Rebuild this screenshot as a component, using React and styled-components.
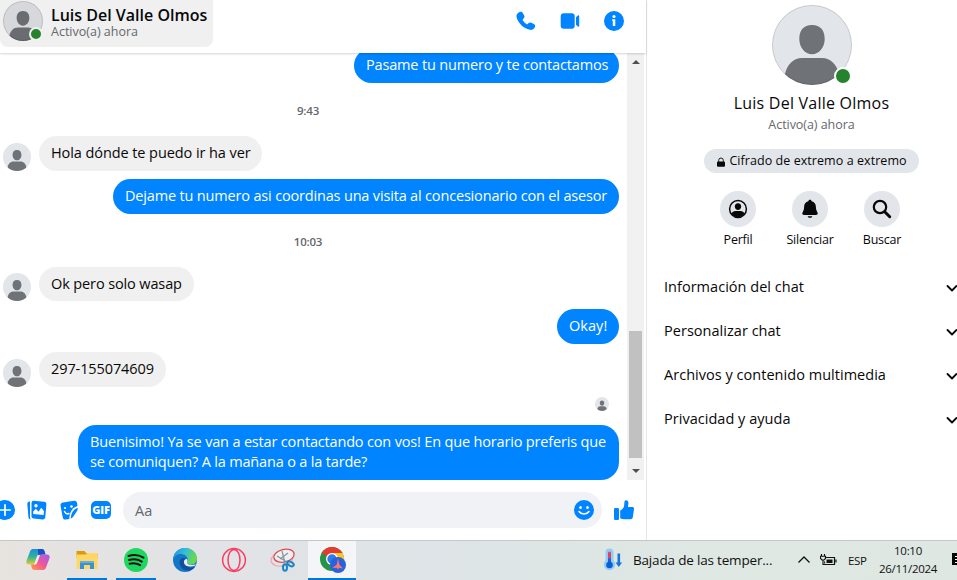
import React from 'react';
import styled, { createGlobalStyle, css } from 'styled-components';

const messages = [
	{ type: 'out', text: ['Pasame tu numero y te contactamos'], width: 265, height: 35 },
	{ type: 'time', text: '9:43', height: 53 },
	{ type: 'in', text: ['Hola dónde te puedo ir ha ver'], width: 223, height: 35, gap: 8, tracking: -0.08 },
	{ type: 'out', text: ['Dejame tu numero asi coordinas una visita al concesionario con el asesor'], width: 506, height: 35 },
	{ type: 'time', text: '10:03', height: 53 },
	{ type: 'in', text: ['Ok pero solo wasap'], width: 155, height: 34, gap: 8, tracking: -0.12 },
	{ type: 'out', text: ['Okay!'], width: 62, height: 35, gap: 8, tracking: 0.05 },
	{ type: 'in', text: ['297-155074609'], width: 127, height: 35, tracking: -0.1 },
	{ type: 'seen', height: 38 },
	{
		type: 'out',
		text: ['Buenisimo! Ya se van a estar contactando con vos! En que horario preferis que', 'se comuniquen? A la mañana o a la tarde?'],
		width: 541,
		height: 55,
	},
];

const sections = ['Información del chat', 'Personalizar chat', 'Archivos y contenido multimedia', 'Privacidad y ayuda'];

const Avatar = ({ size, pressed }) => (
	<AvatarSvg $size={size} viewBox="0 0 80 80">
		<defs>
			<clipPath id={`face-${size}`}>
				<circle cx="40" cy="40" r="40" />
			</clipPath>
		</defs>
		<g clipPath={`url(#face-${size})`}>
			<rect width="80" height="80" fill={pressed ? '#d6d8dc' : '#e2e5e9'} />
			<path
				d="M40 20c8.500 0 12.700 5.500 12.700 14S47 49.300 40 49.300 27.300 42.500 27.300 34 31.500 20 40 20ZM30 53h20c9 0 15 7 17 16v11H13V69c2-9 8-16 17-16Z"
				fill={pressed ? '#696c70' : '#6f7277'}
			/>
		</g>
		{size > 30 && <circle cx="40" cy="40" r={40 - 40 / size} fill="none" stroke="#000" strokeOpacity=".12" strokeWidth={80 / size} />}
	</AvatarSvg>
);

const Message = ({ item }) => {
	if (item.type === 'time') return <Time $height={item.height}>{item.text}</Time>;
	if (item.type === 'seen') {
		return (
			<Seen $height={item.height}>
				<Avatar size={14} />
			</Seen>
		);
	}
	return (
		<Row $out={item.type === 'out'} $gap={item.gap}>
			{item.type === 'in' && <Avatar size={28} />}
			<Bubble $out={item.type === 'out'} $width={item.width} $height={item.height} $tracking={item.tracking}>
				{item.text.map((line) => (
					<Line key={line}>{line}</Line>
				))}
			</Bubble>
		</Row>
	);
};

const PhoneIcon = () => (
	<Icon $size={20} viewBox="0 0 20 20">
		<path
			d="M3.200 1.200C4.600.300 6 .700 6.800 2l1.400 2.600c.500 1 .300 1.800-.400 2.600l-.900 1c-.300.400-.300.800 0 1.300.900 1.400 2.100 2.600 3.500 3.500.500.300.900.300 1.300 0l1-.900c.800-.700 1.700-.900 2.600-.400l2.600 1.400c1.300.800 1.600 2.200.800 3.500-1 1.700-2.800 2.600-4.900 2.200C7.400 17.700 1.600 11.600.500 5.800.200 3.900 1.300 2.200 3.200 1.200Z"
		/>
	</Icon>
);

const VideoIcon = () => (
	<Icon $size={20} viewBox="0 0 20 20">
		<rect x=".7" y="2.300" width="14" height="15.400" rx="3" />
		<path d="M16 6.200 17.800 4.600c.8-.6 1.400-.2 1.400.6v9.600c0 .800-.600 1.200-1.400.600L16 13.800Z" />
	</Icon>
);

const InfoIcon = () => (
	<Icon $size={20} viewBox="0 0 20 20">
		<circle cx="10" cy="10" r="10" />
		<circle cx="10" cy="5.500" r="1.600" fill="#fff" />
		<path d="M8.200 8.200h3.100v6.800h-2.500v-5h-.6Z" fill="#fff" />
	</Icon>
);

const PlusIcon = () => (
	<Icon $size={20} viewBox="0 0 20 20">
		<circle cx="10" cy="10" r="10" />
		<path d="M10 4.800v10.400M4.800 10h10.400" stroke="#fff" strokeWidth="1.700" strokeLinecap="round" />
	</Icon>
);

const PhotosIcon = () => (
	<Icon $size={20} viewBox="0 0 20 20">
		<path d="M1.900 1.800 3 1.200v16.600l.5 1.600c-1.200-.1-1.900-.8-2-1.900L.300 4c0-1.100.6-1.900 1.600-2.200Z" />
		<path d="m6.800.800 10.400 1c1.400.200 2.300 1.100 2.200 2.500L18.300 17c-.1 1.500-1.100 2.500-2.600 2.400l-9-.8c-1.300-.2-2.200-1.100-2.200-2.400V3C4.600 1.600 5.400.700 6.800.800Z" />
		<path d="m6.200 11.600 2.700-2.900 2.600 3 2.800-4 2.700 3.500-.4 3.700-10.400-.9Z" fill="#fff" />
		<circle cx="9" cy="5.700" r="1.700" fill="#fff" />
	</Icon>
);

const StickerIcon = () => (
	<Icon $size={20} viewBox="0 0 20 20">
		<path d="M4 2.500 15 .800c1.500-.200 2.600.500 3 2l.5 3.200c-4.700 1.400-7.700 5-8.300 13l-3.400.500c-1.600.200-2.600-.500-3-2L1.500 5.600C1.300 4 2.300 2.800 4 2.500Z" />
		<path d="M18.700 7.700c.200 1.700-.300 3-1.500 4.500l-2.900 4.300c-.8 1.100-1.500 1.800-2.600 2.200.5-6.100 2.900-9.300 7-11Z" />
		<path d="M5.500 11.500c1 2 2.800 2.800 4.500 2" fill="none" stroke="#fff" strokeWidth="1.500" strokeLinecap="round" />
		<circle cx="6" cy="8" r="1.100" fill="#fff" />
		<circle cx="12.500" cy="6.500" r="1.300" fill="#fff" />
	</Icon>
);

const SmileIcon = () => (
	<Icon $size={20} viewBox="0 0 20 20">
		<circle cx="10" cy="10" r="10" />
		<ellipse cx="6.500" cy="7.500" rx="1.300" ry="1.600" fill="#fff" />
		<ellipse cx="13.500" cy="7.500" rx="1.300" ry="1.600" fill="#fff" />
		<path d="M5 11.500c2.200 3.300 7.800 3.300 10 0" fill="none" stroke="#fff" strokeWidth="1.500" strokeLinecap="round" />
	</Icon>
);

const ThumbIcon = () => (
	<Icon $size={20} viewBox="0 0 20 20">
		<rect x="0" y="8" width="5" height="12" rx="1.200" />
		<path d="M6.200 10.500c2-.8 3.300-2.400 3.900-4.500l.3-3.500C10.500 1 10.900.200 12 .200c1.700 0 2.500 1.400 2.400 3.200l-.5 3.500h4.300c1.200 0 2 .9 1.800 2.100l-1.200 8.200c-.2 1.300-1.300 2.100-2.700 2.100h-4.600c-2 0-4-.3-5.300-1Z" />
	</Icon>
);

const LockIcon = () => (
	<Icon $size={10} $color="#080809" viewBox="0 0 10 10">
		<path d="M2.700 5V3.300a2.300 2.300 0 0 1 4.600 0V5" fill="none" stroke="#080809" strokeWidth=".9" />
		<rect x="1" y="4.500" width="8" height="5.200" rx="1" />
	</Icon>
);

const ProfileIcon = () => (
	<Icon $size={20} $color="#080809" viewBox="0 0 20 20">
		<circle cx="10" cy="10" r="8.400" fill="none" stroke="#080809" strokeWidth="1.500" />
		<path d="M10 4.200c2.100 0 3.200 1.400 3.200 3.300S11.800 11 10 11 6.800 9.400 6.800 7.500 7.900 4.200 10 4.200ZM7.500 12h5c2 0 3.300 1 4 2.700a8 8 0 0 1-13 0c.700-1.700 2-2.700 4-2.700Z" />
	</Icon>
);

const BellIcon = () => (
	<Icon $size={20} $color="#080809" viewBox="0 0 20 20">
		<path d="M10 .700c1 0 1.500.600 1.700 1.500 2.700.700 4.100 2.700 4.200 5.500 0 2.400.5 4 1.500 5.500.8 1.700.100 2.800-1.600 2.800H4.200c-1.700 0-2.400-1.100-1.600-2.800 1-1.500 1.500-3.100 1.500-5.500.1-2.800 1.500-4.800 4.200-5.500C8.500 1.300 9 .700 10 .700ZM7.700 17.200h4.600c-.2 1-1.100 1.600-2.300 1.600s-2.100-.6-2.300-1.600Z" />
	</Icon>
);

const SearchIcon = () => (
	<Icon $size={20} viewBox="0 0 20 20">
		<circle cx="8" cy="8" r="6.200" fill="none" stroke="#080809" strokeWidth="2.200" />
		<path d="m12.700 12.700 5 5" stroke="#080809" strokeWidth="3" strokeLinecap="round" />
	</Icon>
);

const ChevronIcon = () => (
	<Icon $size={12} viewBox="0 0 12 12">
		<path d="m1.500 4 4.500 4.500L10.500 4" fill="none" stroke="#080809" strokeWidth="1.800" strokeLinecap="round" strokeLinejoin="round" />
	</Icon>
);

const CopilotIcon = () => (
	<Icon $size={26} viewBox="0 0 26 26">
		<defs>
			<linearGradient id="cop-a" x1="0" y1="0" x2="0" y2="1">
				<stop offset="0" stopColor="#1b8de4" />
				<stop offset=".5" stopColor="#2fb39a" />
				<stop offset="1" stopColor="#e5cc2c" />
			</linearGradient>
			<linearGradient id="cop-b" x1=".9" y1="0" x2="0" y2="1">
				<stop offset="0" stopColor="#a85be8" />
				<stop offset=".5" stopColor="#f0569a" />
				<stop offset="1" stopColor="#ff9b42" />
			</linearGradient>
		</defs>
		<path d="M8 2h9c1.200 0 2 .8 2.400 2l1.100 3.500h-3c-1.600 0-2.300.8-2.700 2L12.700 15c-.5 1.700-1.700 2.500-3.500 2.500H4c-2.200 0-3-1.600-2.500-3.800L5 4.500C5.500 2.900 6.500 2 8 2Z" fill="url(#cop-a)" />
		<path d="M13 2h4c1.200 0 2 .8 2.400 2l1.100 3.500h-3c-1.600 0-2.300.8-2.700 2L13 6.500Z" fill="#194fc8" />
		<path d="M18 23H9.500c-1.500 0-2.300-.8-2.700-2L6 17.500h2.500c1.800 0 3-.3 3.500-2l2.300-6.100c.4-1.300 1.300-1.900 2.700-1.900h5c2.200 0 3 1.600 2.500 3.800L21 20.500c-.5 1.600-1.500 2.500-3 2.500Z" fill="url(#cop-b)" />
		<path d="m12.300 8.500 3-.7c-.3.400-.6 1-.8 1.600L12 16.100c-.5 1.200-1.400 1.600-3 1.600Z" fill="#f0edf0" />
	</Icon>
);

const FolderIcon = () => (
	<Icon $size={24} viewBox="0 0 24 24">
		<path d="M1.500 3h8l2 2.500h11V10h-21Z" fill="#d99b08" />
		<path d="M1.500 6.500H11L13 5h9.500v16h-21Z" fill="#ffd765" />
		<path d="M5 21v-8h14v8h-4v-4H9v4Z" fill="#3d91d1" />
		<path d="M5 13h14v2H5Z" fill="#64aee4" />
	</Icon>
);

const SpotifyIcon = () => (
	<Icon $size={24} viewBox="0 0 24 24">
		<circle cx="12" cy="12" r="12" fill="#1ed760" />
		<path d="M4.500 8c5-1.500 10.500-1 15 1.600M5 12c4.500-1.200 9-.7 12.800 1.600M5.600 15.700c3.800-.9 7.400-.5 10.600 1.400" fill="none" stroke="#121212" strokeWidth="2" strokeLinecap="round" />
	</Icon>
);

const EdgeIcon = () => (
	<Icon $size={24} viewBox="0 0 24 24">
		<defs>
			<linearGradient id="edge-top" x1="0" y1="0" x2="1" y2=".3">
				<stop offset="0" stopColor="#1c8fd8" />
				<stop offset=".5" stopColor="#32bddb" />
				<stop offset="1" stopColor="#6ad94d" />
			</linearGradient>
		</defs>
		<circle cx="12" cy="12" r="12" fill="#1377c9" />
		<path d="M0 12C.500 4.500 6 0 12 0c7 0 12 5 12 10.500 0 4-3 6.200-6.200 6.200-2.800 0-4.300-1-4-2 .9-1 1-1.800 1-2.700C14.800 8 11 6 7.500 6 4 6 1 8.500 0 12Z" fill="url(#edge-top)" />
		<path d="M7 12c-1.500 5 2 10.500 8 10.500 3 0 5.500-1.500 7.300-4-4 1.900-9.800.9-11-3.500-.5-2 .2-3.700 1.700-4.500-2.400-1.200-5-.5-6 1.500Z" fill="#134d9b" />
		<path d="M14 11c-2.100 0-3.500 1.700-3 3.900.8 3.300 5.800 4.600 10.800 2.800l1-1.700c-2.400 1.500-8 1.500-9-.9.8-1.200 1-2.700.2-4.100Z" fill="#e6ecef" />
	</Icon>
);

const OperaIcon = () => (
	<Icon $size={26} viewBox="0 0 26 26">
		<circle cx="13" cy="13" r="11.400" fill="none" stroke="#fa3c62" strokeWidth="1.500" />
		<ellipse cx="13" cy="13" rx="6" ry="10.600" fill="none" stroke="#fa3c62" strokeWidth="1.500" />
	</Icon>
);

const SnipIcon = () => (
	<Icon $size={26} viewBox="0 0 26 26">
		<ellipse cx="12" cy="12" rx="11" ry="7" transform="rotate(-12 12 12)" fill="none" stroke="#eba7a9" strokeWidth="1.200" />
		<ellipse cx="14" cy="8.700" rx="10.300" ry="6.300" transform="rotate(-13 14 8.700)" fill="#edf0f3" stroke="#df4b50" strokeWidth="1.300" />
		<path d="m7 9 10 6M12 4l3 12M18 6l-8 6" stroke="#8b9298" strokeWidth="1.200" />
		<ellipse cx="15" cy="20.500" rx="2" ry="3.300" fill="none" stroke="#1785cc" strokeWidth="2" />
		<ellipse cx="20.500" cy="16.800" rx="2" ry="3.500" transform="rotate(-60 20.500 16.800)" fill="none" stroke="#1785cc" strokeWidth="2" />
	</Icon>
);

const ChromeIcon = () => (
	<Icon $size={26} viewBox="0 0 26 26">
		<circle cx="12" cy="12" r="12" fill="#269447" />
		<path d="M12 12 1.600 6A12 12 0 0 1 22.400 6Z" fill="#e33b2e" />
		<path d="M12 6h10.400A12 12 0 0 1 12 24l5.200-9Z" fill="#fcc629" />
		<circle cx="12" cy="12" r="6" fill="#fff" />
		<circle cx="12" cy="12" r="4.700" fill="#2f7bea" />
		<circle cx="18" cy="18" r="8" fill="#2b62dc" />
		<path d="m18 11.800 1.300 5.700 3.500 4-3.800-.8-1 2-1-2-4.500.3 4.300-3.500Z" fill="#ff786c" />
	</Icon>
);

const ThermoIcon = () => (
	<Icon $size={24} viewBox="0 0 24 24">
		<path d="M4.500 4.500a4 4 0 0 1 8 0v8a5.700 5.700 0 1 1-8 0Z" fill="#92cdf3" />
		<path d="M8.500 5v11" stroke="#d84769" strokeWidth="3" strokeLinecap="round" />
		<path d="M8.500 10.500v7" stroke="#1865d8" strokeWidth="3" />
		<circle cx="8.500" cy="17" r="3.300" fill="#095fd8" />
		<path d="M16.500 5.500h2.600v9h2l-3.300 4.500-3.300-4.500h2Z" fill="#1475dc" />
	</Icon>
);

const BatteryIcon = () => (
	<Icon $size={17} viewBox="0 0 17 17">
		<path d="M5.500 5.500h9v7h-10v-3M16 7.500v3" fill="none" stroke="#111" strokeWidth="1.200" />
		<path d="M6.500 7.500h6v3.500h-6Z" fill="#111" />
		<path d="M1.500 2v2M4.500 2v2M.500 4.200h5v2.300L4 8H2L.500 6.500ZM3 8v4.500h2" fill="#dfe7e3" stroke="#111" strokeWidth="1.100" />
	</Icon>
);

const UpIcon = () => (
	<Icon $size={14} viewBox="0 0 14 14">
		<path d="m1.500 9.500 5.500-5.500 5.500 5.500" fill="none" stroke="#111" strokeWidth="1.300" />
	</Icon>
);

const NoticeIcon = () => (
	<Icon $size={16} viewBox="0 0 16 16">
		<path d="M0 1h15v12H9l-3 3v-3H0Z" fill="#050505" />
		<path d="M3 4.500h9M3 7.500h9M3 10.500h9" stroke="#fff" strokeWidth="1" />
	</Icon>
);

const apps = [
	{ name: 'copilot', icon: CopilotIcon },
	{ name: 'files', icon: FolderIcon, open: true },
	{ name: 'spotify', icon: SpotifyIcon, open: true },
	{ name: 'edge', icon: EdgeIcon },
	{ name: 'opera', icon: OperaIcon },
	{ name: 'snip', icon: SnipIcon },
	{ name: 'chrome', icon: ChromeIcon, active: true },
];

const actions = [
	{ label: 'Perfil', icon: ProfileIcon },
	{ label: 'Silenciar', icon: BellIcon },
	{ label: 'Buscar', icon: SearchIcon },
];

const App = () => {
	return (
		<>
			<GlobalStyle />
			<Screen>
				<Main>
					<Chat>
						<Header>
							<Contact>
								<AvatarBox>
									<Avatar size={40} pressed />
									<Online $size={10} $ring={2} $ringColor="#f0f0f0" />
								</AvatarBox>
								<div>
									<ContactName>Luis Del Valle Olmos</ContactName>
									<ContactStatus>Activo(a) ahora</ContactStatus>
								</div>
							</Contact>
							<HeaderActions>
								<PhoneIcon />
								<VideoIcon />
								<InfoIcon />
							</HeaderActions>
						</Header>
						<Body>
							<Messages>
								{messages.map((item, index) => (
									<Message key={index} item={item} />
								))}
							</Messages>
							<Scrollbar>
								<Arrow $up />
								<Track>
									<Thumb />
								</Track>
								<Arrow />
							</Scrollbar>
						</Body>
						<Composer>
							<Tools>
								<PlusIcon />
								<PhotosIcon />
								<StickerIcon />
								<Gif>GIF</Gif>
							</Tools>
							<Input>
								<span>Aa</span>
								<SmileIcon />
							</Input>
							<ThumbIcon />
						</Composer>
					</Chat>
					<Panel>
						<AvatarBox>
							<Avatar size={80} />
							<Online $size={14} $ring={2} $ringColor="#fff" />
						</AvatarBox>
						<PanelName>Luis Del Valle Olmos</PanelName>
						<PanelStatus>Activo(a) ahora</PanelStatus>
						<Encrypted>
							<LockIcon />
							Cifrado de extremo a extremo
						</Encrypted>
						<Actions>
							{actions.map(({ label, icon: ActionIcon }) => (
								<Action key={label}>
									<Circle>
										<ActionIcon />
									</Circle>
									{label}
								</Action>
							))}
						</Actions>
						<Sections>
							{sections.map((title) => (
								<Section key={title}>
									{title}
									<ChevronIcon />
								</Section>
							))}
						</Sections>
					</Panel>
				</Main>
				<Taskbar>
					<Apps>
						{apps.map(({ name, icon: AppIcon, open, active }) => (
							<AppButton key={name} $open={open} $active={active}>
								<AppIcon />
							</AppButton>
						))}
					</Apps>
					<Tray>
						<Weather>
							<ThermoIcon />
							Bajada de las temper...
						</Weather>
						<UpIcon />
						<BatteryIcon />
						<Language>ESP</Language>
						<Clock>
							<span>10:10</span>
							<span>26/11/2024</span>
						</Clock>
						<NoticeIcon />
					</Tray>
				</Taskbar>
			</Screen>
		</>
	);
};

export default App;

const GlobalStyle = createGlobalStyle`
	* {
		box-sizing: border-box;
	}
	body {
		margin: 0;
		overflow: hidden;
		font-family: 'Open Sans', 'Noto Sans', sans-serif;
		color: #080809;
		background: #fff;
	}
`;

const Icon = styled.svg`
	display: block;
	flex: none;
	width: ${({ $size }) => $size}px;
	height: ${({ $size }) => $size}px;
	fill: ${({ $color }) => $color || '#0084ff'};
`;
const AvatarSvg = styled.svg`
	display: block;
	flex: none;
	width: ${({ $size }) => $size}px;
	height: ${({ $size }) => $size}px;
`;
const Screen = styled.div`
	display: flex;
	flex-direction: column;
	width: 957px;
	height: 580px;
	overflow: hidden;
	white-space: nowrap;
`;
const Main = styled.main`
	display: flex;
	height: 540px;
	overflow: hidden;
`;
const Chat = styled.section`
	display: flex;
	flex: none;
	flex-direction: column;
	width: 647px;
	border-right: 1px solid #e4e5e7;
`;
const Header = styled.header`
	display: flex;
	justify-content: space-between;
	height: 53px;
	padding-right: 22px;
	box-shadow: 0 1px 2px rgba(0, 0, 0, 0.17);
	z-index: 1;
`;
const Contact = styled.div`
	display: flex;
	width: 213px;
	height: 47px;
	padding: 1px 0 0 3px;
	gap: 8px;
	border-radius: 0 0 8px 8px;
	background: #f0f0f0;
`;
const AvatarBox = styled.div`
	position: relative;
	flex: none;
	align-self: flex-start;
`;
const Online = styled.span`
	position: absolute;
	right: ${({ $ring }) => 2 - $ring}px;
	bottom: ${({ $ring }) => 2 - $ring}px;
	width: ${({ $size, $ring }) => $size + $ring * 2}px;
	height: ${({ $size, $ring }) => $size + $ring * 2}px;
	border: ${({ $ring, $ringColor }) => `${$ring}px solid ${$ringColor}`};
	border-radius: 50%;
	background: #24832c;
`;
const ContactName = styled.div`
	margin-top: 4px;
	font-size: 16px;
	font-weight: 600;
	line-height: 20px;
	letter-spacing: 0;
`;
const ContactStatus = styled.div`
	font-size: 12.5px;
	line-height: 14px;
	letter-spacing: 0;
	color: #65686c;
`;
const HeaderActions = styled.div`
	display: flex;
	gap: 24px;
	padding-top: 11px;
`;
const Body = styled.div`
	display: flex;
	height: 427px;
	padding-right: 2px;
`;
const Messages = styled.div`
	display: flex;
	flex: 1;
	flex-direction: column;
	justify-content: flex-end;
	padding: 0 8px 0 3px;
	overflow: hidden;
`;
const Row = styled.div`
	display: flex;
	flex: none;
	align-items: flex-end;
	justify-content: ${({ $out }) => ($out ? 'flex-end' : 'flex-start')};
	gap: 8px;
	margin-bottom: ${({ $gap }) => $gap || 0}px;
`;
const Bubble = styled.div`
	display: flex;
	flex-direction: column;
	justify-content: center;
	width: ${({ $width }) => $width}px;
	height: ${({ $height }) => $height}px;
	padding: 0 12px 1px;
	border-radius: 18px;
	font-size: 14.5px;
	line-height: 20px;
	letter-spacing: ${({ $tracking }) => $tracking ?? -0.17}px;
	${({ $out }) =>
		$out
			? css`
					color: #fff;
					background: #0084ff;
			  `
			: css`
					color: #080809;
					background: #f0f0f0;
			  `}
`;
const Line = styled.span`
	display: block;
`;
const Time = styled.div`
	display: flex;
	flex: none;
	align-items: center;
	justify-content: center;
	height: ${({ $height }) => $height}px;
	padding: 2px 6px 0 0;
	font-size: 11.5px;
	font-weight: 600;
	letter-spacing: -0.2px;
	color: #65686c;
`;
const Seen = styled.div`
	display: flex;
	flex: none;
	align-items: center;
	justify-content: flex-end;
	height: ${({ $height }) => $height}px;
	padding: 0 10px 4px 0;
`;
const Scrollbar = styled.div`
	display: flex;
	flex-direction: column;
	align-items: center;
	justify-content: space-between;
	width: 17px;
	padding: 7px 0;
	background: #f1f1f1;
`;
const Arrow = styled.span`
	border: 4px solid transparent;
	${({ $up }) => ($up ? 'border-top: 0; border-bottom-color: #505050;' : 'border-bottom: 0; border-top-color: #505050;')}
`;
const Track = styled.div`
	display: flex;
	align-items: flex-end;
	height: 393px;
	padding-bottom: 5px;
`;
const Thumb = styled.div`
	width: 13px;
	height: 127px;
	background: #c1c1c1;
`;
const Composer = styled.div`
	display: flex;
	align-items: center;
	gap: 12px;
	height: 60px;
	padding-right: 12px;
`;
const Tools = styled.div`
	display: flex;
	gap: 12px;
	margin-left: -5px;
`;
const Gif = styled.span`
	width: 20px;
	height: 18px;
	margin: 1px 0;
	border-radius: 5px;
	color: #fff;
	background: #0084ff;
	font-size: 11px;
	font-weight: 800;
	line-height: 18px;
	letter-spacing: -0.2px;
	text-align: center;
`;
const Input = styled.div`
	display: flex;
	flex: 1;
	align-items: center;
	justify-content: space-between;
	height: 36px;
	padding: 0 8px 0 12px;
	border-radius: 18px;
	font-size: 14.5px;
	color: #65686c;
	background: #f0f2f5;
`;
const Panel = styled.aside`
	display: flex;
	flex: none;
	flex-direction: column;
	align-items: center;
	width: 329px;
	padding-top: 5px;
	> ${AvatarBox} {
		align-self: center;
	}
`;
const PanelName = styled.div`
	margin-top: 7px;
	font-size: 16px;
	font-weight: 500;
	line-height: 22px;
	letter-spacing: 0.23px;
`;
const PanelStatus = styled.div`
	margin-top: 3px;
	font-size: 12.5px;
	line-height: 16px;
	letter-spacing: -0.05px;
	color: #65686c;
`;
const Encrypted = styled.div`
	display: flex;
	align-items: center;
	justify-content: center;
	gap: 3px;
	width: 215px;
	height: 24px;
	margin-top: 16px;
	padding-bottom: 1px;
	border-radius: 12px;
	font-size: 12.5px;
	font-weight: 500;
	letter-spacing: 0.06px;
	background: #e2e5e9;
	${Icon} {
		margin-top: 3px;
	}
`;
const Actions = styled.div`
	display: flex;
	margin: 18px 3px 0 0;
`;
const Action = styled.div`
	display: flex;
	flex-direction: column;
	align-items: center;
	width: 72px;
	font-size: 12.5px;
	line-height: 16px;
	letter-spacing: -0.22px;
`;
const Circle = styled.span`
	display: flex;
	align-items: center;
	justify-content: center;
	width: 36px;
	height: 36px;
	margin-bottom: 5px;
	border-radius: 50%;
	background: #e2e5e9;
`;
const Sections = styled.div`
	align-self: stretch;
	margin-top: 16px;
	padding: 0 18px 0 17px;
`;
const Section = styled.div`
	display: flex;
	align-items: center;
	justify-content: space-between;
	height: 44px;
	font-size: 14.5px;
	font-weight: 500;
	letter-spacing: 0.03px;
	${Icon} {
		margin-top: 4px;
	}
`;
const Taskbar = styled.footer`
	display: flex;
	justify-content: space-between;
	height: 40px;
	border-top: 1px solid #c5c7c8;
	background: linear-gradient(90deg, #e7e3df 0%, #e2e3e6 20%, #dee4e7 45%, #dfe8e3 75%, #dfe7e2 100%);
`;
const Apps = styled.div`
	display: flex;
	gap: 1px;
	padding-left: 14px;
`;
const AppButton = styled.div`
	display: flex;
	align-items: center;
	justify-content: center;
	width: 48px;
	padding-bottom: ${({ $active }) => ($active ? 0 : 1)}px;
	background: ${({ $active }) => ($active ? '#f4f5f6' : 'none')};
	background: ${({ $open }) => $open && 'linear-gradient(#0078d7, #0078d7) bottom / 40px 2px no-repeat'};
	border-bottom: ${({ $active }) => ($active ? '2px solid #0078d7' : '0')};
	${Icon} {
		margin-left: ${({ $active }) => ($active ? 2 : 0)}px;
	}
`;
const Tray = styled.div`
	display: flex;
	align-items: center;
	margin-right: -11px;
	padding-bottom: 1px;
	font-size: 12px;
	color: #111;
`;
const Weather = styled.div`
	display: flex;
	flex: none;
	align-items: center;
	gap: 8px;
	width: 196px;
	font-size: 13.5px;
	letter-spacing: -0.18px;
	+ ${Icon} {
		margin-right: 9px;
	}
`;
const Language = styled.span`
	width: 20px;
	margin: 0 10px 0 11px;
	font-size: 11.5px;
	letter-spacing: -0.4px;
`;
const Clock = styled.div`
	display: flex;
	flex-direction: column;
	align-items: center;
	width: 60px;
	margin-right: 14px;
	font-size: 11.5px;
	line-height: 18px;
	letter-spacing: -0.3px;
`;
